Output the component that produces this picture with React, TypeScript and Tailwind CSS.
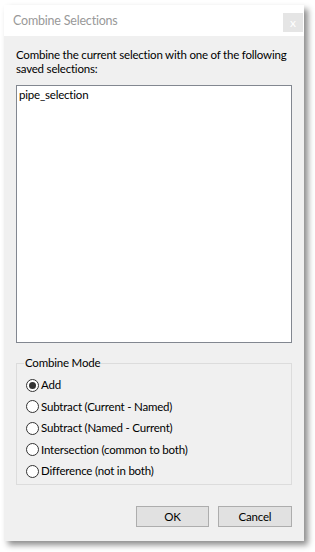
import React, { useState } from "react";

const modes = [
  "Add",
  "Subtract (Current - Named)",
  "Subtract (Named - Current)",
  "Intersection (common to both)",
  "Difference (not in both)",
];

const Radio = ({ checked }: { checked: boolean }) => (
  <span className="w-[13px] h-[13px] rounded-full border border-[#333] bg-white flex items-center justify-center shrink-0">
    {checked && <span className="w-[7px] h-[7px] rounded-full bg-[#333]" />}
  </span>
);

export default function App() {
  const [mode, setMode] = useState(0);

  return (
    <div
      className="w-[315px] h-[552px] bg-white pl-[4px] pt-[5px] text-[11.5px] tracking-[-0.2px] text-black"
      style={{ fontFamily: '"Segoe UI", Lato, sans-serif' }}
    >
      <div className="w-[300px] h-[536px] bg-[#f0f0f0] flex flex-col shadow-[4px_4px_6px_rgba(0,0,0,0.45)]">
        {/* title bar */}
        <div className="h-[31px] bg-white flex items-start justify-between">
          <span className="mt-[7px] ml-[9px] text-[12.5px] text-[#999]">
            Combine Selections
          </span>
          <button className="mt-[8px] mr-[1px] w-[20px] h-[19px] bg-[#e5e5e5] text-[#fff] text-[12px] leading-none flex items-center justify-center">
            x
          </button>
        </div>

        <div className="flex flex-col px-[12px] flex-1">
          <p className="mt-[12px] leading-[14px]">
            Combine the current selection with one of the following saved
            selections:
          </p>

          {/* saved selections list */}
          <div className="mt-[9px] h-[258px] bg-white border border-[#828790] px-[2px] pt-[1px]">
            <div className="leading-[15px]">pipe_selection</div>
          </div>

          {/* combine mode group */}
          <fieldset className="mt-[13px] h-[129px] border border-[#dcdcdc] px-[9px] pt-[5px]">
            <legend className="px-[1px] ml-[-2px] leading-[14px]">Combine Mode</legend>
            <div className="flex flex-col gap-[7.5px] mt-[3px]">
              {modes.map((m, i) => (
                <label
                  key={m}
                  className="flex items-center gap-[2px] h-[14px] cursor-default"
                  onClick={() => setMode(i)}
                >
                  <Radio checked={mode === i} />
                  <span>{m}</span>
                </label>
              ))}
            </div>
          </fieldset>

          <div className="mt-[21px] flex justify-end gap-[9px]">
            <button className="w-[73px] h-[21px] bg-[#e1e1e1] border border-[#adadad]">
              OK
            </button>
            <button className="w-[74px] h-[21px] bg-[#e1e1e1] border border-[#adadad]">
              Cancel
            </button>
          </div>
        </div>
      </div>
    </div>
  );
}
